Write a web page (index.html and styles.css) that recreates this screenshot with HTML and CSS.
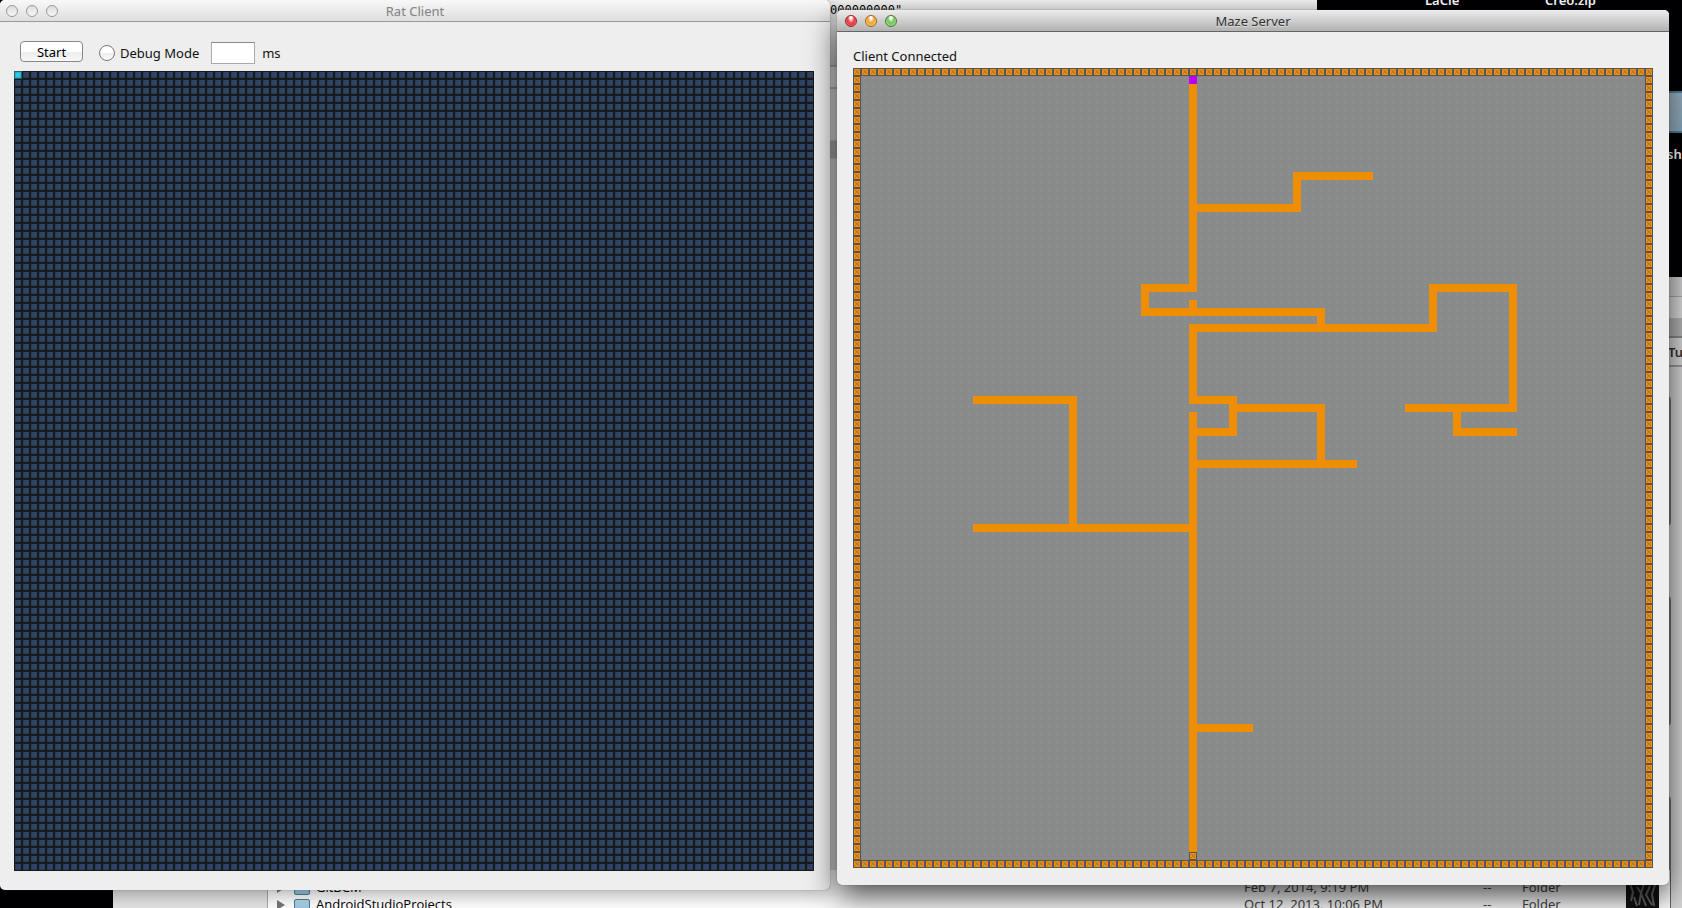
FILE: index.html
```html
<!DOCTYPE html>
<html lang="en">
<head>
<meta charset="utf-8">
<title>Maze Server</title>
<link rel="stylesheet" href="styles.css">
</head>
<body>
<main class="desktop">
  <span class="desk-label lacie">LaCie</span>
  <span class="desk-label creo">Creo.zip</span>
  <span class="desk-folder"></span>
  <span class="desk-label shot">sho</span>

  <section class="editor"><span class="editor-text">000000000"</span><div class="editor-side"></div></section>

  <section class="browser">
    <div class="browser-bar"></div>
    <div class="browser-tools"></div>
    <div class="browser-strip"></div>
    <div class="browser-tabs">Tu</div>
    <div class="browser-page"><i class="card"></i><i class="card"></i><i class="card"></i></div>
  </section>

  <section class="finder">
    <div class="finder-side"></div>
    <table class="files">
      <tr>
        <td class="name"><span class="arrow"></span><span class="folder"></span>GitBCM</td>
        <td class="date">Feb 7, 2014, 9:19 PM</td><td class="size">--</td><td class="kind">Folder</td>
      </tr>
      <tr>
        <td class="name"><span class="arrow"></span><span class="folder"></span>AndroidStudioProjects</td>
        <td class="date">Oct 12, 2013, 10:06 PM</td><td class="size">--</td><td class="kind">Folder</td>
      </tr>
    </table>
  </section>
  <svg class="photo" width="33" height="26" viewBox="0 0 33 26"><rect width="33" height="26" fill="#111"/><path d="M4 2l3 8-2 9M11 5l4 6-2 12M18 2l-3 9 5 13M24 4l-4 9 6 10M29 3l-3 9 2 12M8 15l3 9" stroke="#66666a" stroke-width="2" fill="none"/></svg>

  <section class="window rat">
    <header class="titlebar">
      <div class="lights"><button class="light" aria-label="Close"></button><button class="light" aria-label="Minimize"></button><button class="light" aria-label="Zoom"></button></div>
      <h1>Rat Client</h1>
    </header>
    <div class="tools">
      <button class="start">Start</button>
      <label class="debug"><input type="radio" name="debug">Debug Mode</label>
      <label class="delay"><input type="text">ms</label>
    </div>
    <svg class="board" width="800" height="800" viewBox="0 0 800 800" shape-rendering="crispEdges">
      <defs>
        <pattern id="cell" width="8" height="8" patternUnits="userSpaceOnUse">
          <rect width="8" height="8" fill="#15191c"/><rect x="1" y="1" width="6" height="6" fill="#2a3a4f"/><rect x="2" y="1" width="5" height="5" fill="#2f4366"/>
        </pattern>
      </defs>
      <rect width="800" height="800" fill="url(#cell)"/>
      <rect width="8" height="8" fill="#29606b"/><rect x="1" y="1" width="6" height="6" fill="#26b4cf"/><rect x="2" y="2" width="4" height="4" fill="#2bc8e4"/>
    </svg>
  </section>

  <section class="window server">
    <header class="titlebar">
      <div class="lights"><button class="light red" aria-label="Close"></button><button class="light amber" aria-label="Minimize"></button><button class="light green" aria-label="Zoom"></button></div>
      <h1>Maze Server</h1>
    </header>
    <p class="status">Client Connected</p>
    <svg class="board" width="800" height="800" viewBox="0 0 800 800" shape-rendering="crispEdges">
      <defs>
        <pattern id="floor" width="8" height="8" patternUnits="userSpaceOnUse">
          <rect width="8" height="8" fill="#8a8a8a"/>
          <path d="M6 0h1v1h-1zM5 1h1v1h-1z" fill="#6a9699"/><path d="M2 6h1v1h-1z" fill="#5e9b9e"/>
          <path d="M3 2h2v1h-2z" fill="#989494"/><path d="M2 1h1v1h-1z" fill="#7e8f90"/>
        </pattern>
        <pattern id="wall" width="8" height="8" patternUnits="userSpaceOnUse">
          <rect width="8" height="8" fill="#555"/><rect x="1" y="1" width="6" height="6" fill="#ed8d12"/>
          <path d="M2 2h1v1h-1zM5 2h1v1h-1zM3 3h1v1h-1zM4 4h1v1h-1zM2 5h1v1h-1zM5 5h1v1h-1z" fill="#b0722a"/>
          <path d="M4 3h1v1h-1zM3 4h1v1h-1zM3 2h1v1h-1zM5 4h1v1h-1z" fill="#c97e20"/>
        </pattern>
      </defs>
      <rect width="800" height="800" fill="url(#floor)"/>
      <path d="M0 0h800v800h-800zM8 8v784h784v-784z" fill="url(#wall)" fill-rule="evenodd"/>
      <g transform="scale(8)" fill="none" stroke="#ef8e00" stroke-width="1">
        <path d="M42.5 2V28M43 27.5H36.5V30.5H58.5V32M42.5 29V31"/>
        <path d="M43 17.5H55.5V13.5H65"/>
        <path d="M42.5 42V32.5H72.5V27.5H82.5V42.5H69M75.5 42V45.5H83"/>
        <path d="M42 41.5H47.5V45.5H43M48 42.5H58.5V49.5M43 49.5H63"/>
        <path d="M42.5 43V98M15 41.5H27.5V57.5M15 57.5H42M43 82.5H50"/>
      </g>
      <rect x="336" y="8" width="8" height="8" fill="#b900f5"/>
      <rect x="336" y="784" width="8" height="8" fill="url(#wall)"/>
    </svg>
  </section>
</main>
</body>
</html>
```
FILE: styles.css
```css
* { box-sizing: border-box; }
body { margin: 0; font-family: "Noto Sans", "Open Sans", sans-serif; font-size: 13px; line-height: 16px; color: #111; }
.desktop { position: relative; height: 100vh; overflow: hidden; background: #010103; }

.desk-label { position: absolute; color: #fff; font-weight: 600; }
.lacie { left: 1425px; top: -8px; }
.creo { left: 1545px; top: -8px; }
.shot { left: 1667px; top: 146px; }
.desk-folder { position: absolute; left: 1660px; top: 91px; width: 40px; height: 42px; background: linear-gradient(100deg, #b3c5d0, #7098b1); border: 2px solid #547f9d; }

.editor { position: absolute; left: 600px; top: 0; width: 717px; height: 890px; background: linear-gradient(#f5f5f5, #e6e6e6 10px, #ddd); }
.editor-text { position: absolute; left: 230px; top: 0; font-family: "DejaVu Sans Mono", monospace; font-size: 12px; line-height: 20px; color: #000; }
.editor-side { margin: 22px 0 0 230px; width: 10px; height: 868px; background: linear-gradient(#eee, #c8c8c8 43px, #888 44px, #e0e0e0 45px 65px, #888 66px, #ddd 67px 118px, #b0b0b0 119px 136px, #d8d8d8 137px, #ddd); }

.browser { position: absolute; left: 1600px; right: 0; top: 277px; bottom: 0; background: #d6d6d6; }
.browser-bar { height: 20px; background: #d2d2d2; border-bottom: 1px solid #aaa; }
.browser-tools { height: 21px; background: #dcdcdc; }
.browser-strip { height: 20px; background: #b4b4b4; border-bottom: 2px solid #888; }
.browser-tabs { height: 29px; padding: 6px 0 0 68px; background: #d8d8d8; border-bottom: 2px solid #999; font-weight: 600; color: #333; }
.browser-page { display: flex; flex-direction: column; gap: 70px; padding: 29px 0 0 20px; }
.card { width: 51px; height: 130px; border-right: 2px solid #777; border-radius: 4px; }

.finder { position: absolute; left: 113px; right: 11px; top: 870px; bottom: 0; display: flex; background: #fff; overflow: hidden; border-right: 1px solid #666; }
.finder-side { width: 155px; flex: none; background: #e4e4e4; border-right: 1px solid #aaa; }
.files { flex: 1; border-collapse: collapse; table-layout: fixed; }
.files tr { height: 18px; }
.files td { padding: 0; white-space: nowrap; vertical-align: top; line-height: 16px; color: #444; }
.files tr:first-child td { padding-top: 9px; height: 26px; }
.files .name { width: 976px; padding-left: 9px; color: #000; }
.files .size { width: 39px; }
.files .date { width: 239px; }
.arrow { display: inline-block; margin-right: 9px; border-left: 8px solid #777; border-top: 5px solid transparent; border-bottom: 5px solid transparent; vertical-align: -1px; }
.folder { display: inline-block; width: 16px; height: 13px; margin-right: 6px; vertical-align: -3px; border: 1px solid #4b7b96; border-radius: 2px; background: linear-gradient(#b4d9ed, #91c0d9); }
.files .name { font-family: "Open Sans", "Noto Sans", sans-serif; }
.photo { position: absolute; left: 1626px; bottom: 0; }

.window { position: absolute; background: #eee; border-radius: 5px; }
.rat { left: 0; top: 0; padding: 0 16px 19px 14px; background: #eee; box-shadow: 0 0 1px #555, 0 4px 20px rgba(0, 0, 0, .35); }
.server { left: 837px; top: 10px; padding: 0 16px 17px; box-shadow: 0 0 1px #333, 0 12px 30px rgba(0, 0, 0, .7); }
.titlebar { position: relative; display: flex; align-items: center; justify-content: center; height: 22px; margin: 0 -16px; border-bottom: 1px solid #656565; border-radius: 5px 5px 0 0; background: linear-gradient(#ececec, #b2b2b2); }
.rat .titlebar { margin-left: -14px; border-color: #999; background: linear-gradient(#f8f8f8, #dedede); }
h1 { margin: 0; font-size: 13px; font-weight: 400; color: #333; text-shadow: 0 1px #ddd; }
.rat h1 { color: #858585; }
.lights { position: absolute; left: 8px; top: 5px; display: flex; gap: 8px; }
.rat .lights { left: 6px; }
.light { width: 12px; height: 12px; padding: 0; border: 1px solid #999; border-radius: 50%; background: linear-gradient(#ddd, #f8f8f8); }
.red { border-color: #982629; background: radial-gradient(ellipse at 50% 15%, #fff 0 10%, #f0494f 45%, #e33e43 60%, #ffa5a0); }
.amber { border-color: #9b641c; background: radial-gradient(ellipse at 50% 15%, #fff 0 10%, #f2a23a 45%, #f4b048 60%, #fff19a); }
.green { border-color: #46782f; background: radial-gradient(ellipse at 50% 15%, #fff 0 10%, #77c35f 45%, #80ce68 60%, #d5ffb0); }

.tools { display: flex; align-items: center; height: 49px; padding: 15px 0 2px 6px; }
.start { width: 63px; height: 21px; padding: 0; margin-bottom: 3px; border: 1px solid #888; border-radius: 4px; background: linear-gradient(#fff 50%, #ececec 51%, #f8f8f8); font: inherit; color: #000; }
.debug, .delay { display: flex; align-items: center; }
.debug { margin-left: 16px; gap: 5px; }
.debug input { appearance: none; width: 16px; height: 16px; margin: 0; border: 1px solid #777; border-radius: 50%; background: linear-gradient(#fff 50%, #ececec 51%, #fff); }
.delay { margin-left: 12px; gap: 7px; }
.delay input { width: 44px; height: 22px; padding: 2px; border: 1px solid #aaa; border-top-color: #888; background: #fff; font: inherit; }
.status { margin: 0; padding: 16px 0 4px; }
.board { display: block; }
```
